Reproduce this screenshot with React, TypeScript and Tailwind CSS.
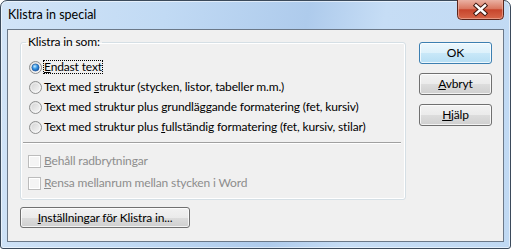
import React from 'react'

function CloseButton() {
  return (
    <svg width="47" height="20" viewBox="0 0 47 20" className="-mt-px mr-[6px] shrink-0">
      <defs>
        <linearGradient id="closeBg" x1="0" y1="0" x2="0" y2="1">
          <stop offset="0" stopColor="#eab1a3" />
          <stop offset="0.45" stopColor="#d9765f" />
          <stop offset="0.5" stopColor="#c7452c" />
          <stop offset="1" stopColor="#d8694c" />
        </linearGradient>
      </defs>
      <path d="M0.5 0 V15.5 Q0.5 19.5 4.5 19.5 H42.5 Q46.5 19.5 46.5 15.5 V0" fill="url(#closeBg)" stroke="#5a261d" />
      <path d="M1.5 0 V15.5 Q1.5 18.5 4.5 18.5 H42.5 Q45.5 18.5 45.5 15.5 V0" fill="none" stroke="#f0b7a8" strokeOpacity="0.6" />
      <path d="M19 5.5 L28 13.5 M28 5.5 L19 13.5" stroke="#3f1710" strokeWidth="4.4" strokeLinecap="square" />
      <path d="M19 5.5 L28 13.5 M28 5.5 L19 13.5" stroke="#ffffff" strokeWidth="2.4" strokeLinecap="square" />
    </svg>
  )
}

function Radio({ checked, id }: { checked?: boolean; id: string }) {
  return (
    <svg width="13" height="13" viewBox="0 0 13 13" className="shrink-0">
      <defs>
        <linearGradient id={`rg${id}`} x1="0" y1="0" x2="1" y2="1">
          <stop offset="0" stopColor="#cfcfcf" />
          <stop offset="1" stopColor="#fbfbfb" />
        </linearGradient>
        <radialGradient id={`rd${id}`} cx="0.4" cy="0.35" r="0.75">
          <stop offset="0" stopColor="#c4ebff" />
          <stop offset="0.45" stopColor="#3595e3" />
          <stop offset="1" stopColor="#154f9f" />
        </radialGradient>
      </defs>
      <circle cx="6.5" cy="6.5" r="6" fill={`url(#rg${id})`} stroke="#8e8f8f" />
      <circle cx="6.5" cy="6.5" r="4.6" fill="none" stroke="#ffffff" strokeOpacity="0.5" />
      {checked && <circle cx="6.5" cy="6.5" r="3.6" fill={`url(#rd${id})`} stroke="#1b4f93" strokeWidth="0.6" />}
    </svg>
  )
}

function Checkbox() {
  return <div className="w-[13px] h-[13px] shrink-0 border border-[#bcbcbc] bg-[#f4f4f4] shadow-[inset_0_0_0_1px_#ffffff]"></div>
}

function Button({ children, primary, className }: { children: React.ReactNode; primary?: boolean; className?: string }) {
  return (
    <div
      className={
        'h-[21px] rounded-[3px] border flex items-center justify-center text-[12px] leading-[14px] text-black whitespace-nowrap shadow-[inset_0_0_0_1px_rgba(255,255,255,0.75)] ' +
        (primary
          ? 'border-[#3c7fb1] bg-[linear-gradient(180deg,#ecf7fd_0%,#ddf1fb_50%,#c9e8f8_50%,#b6def4_100%)] '
          : 'border-[#707070] bg-[linear-gradient(180deg,#f2f2f2_0%,#ebebeb_50%,#dddddd_50%,#cfcfcf_100%)] ') +
        (className ?? '')
      }
    >
      {children}
    </div>
  )
}

const options = [
  { pre: '', u: 'E', post: 'ndast text', checked: true },
  { pre: 'Text med ', u: 's', post: 'truktur (stycken, listor, tabeller m.m.)' },
  { pre: 'Text med struktur plus ', u: 'g', post: 'rundläggande formatering (fet, kursiv)' },
  { pre: 'Text med struktur plus ', u: 'f', post: 'ullständig formatering (fet, kursiv, stilar)' },
]

export default function App() {
  return (
    <div className="w-[511px] h-[249px] bg-white font-['Lato',sans-serif]">
      <div className="w-full h-full flex flex-col rounded-t-[7px] rounded-b-[3px] border border-[#3b4a5b] bg-[linear-gradient(100deg,#d2e4f7_0%,#c1daf4_30%,#aecbec_56%,#c6ddf5_70%,#c0d9f3_100%)] shadow-[inset_0_0_0_1px_rgba(255,255,255,0.55)]">
        <div className="h-[28px] flex items-start justify-between">
          <span className="pl-[7px] mt-[6px] text-[12.5px] leading-[16px] text-black">Klistra in special</span>
          <CloseButton />
        </div>
        <div className="mx-[6px] mb-[6px] flex-1 border border-[#6b7888] bg-[#f0f0f0] flex pl-[12px] pt-[4px] text-[12px] tracking-[-0.15px] text-black whitespace-nowrap">
          <div className="w-[386px] flex flex-col">
            <fieldset className="h-[166px] border border-[#d5dfe5] rounded-[3px] shadow-[inset_0_0_0_1px_#ffffff] flex flex-col">
              <legend className="ml-[5px] px-[2px] leading-[16px]">Klistra in som:</legend>
              <div className="pl-[8px] pt-[7px] flex flex-col">
                {options.map((o, i) => (
                  <div key={i} className="h-[20px] flex items-center gap-[1px]">
                    <Radio checked={o.checked} id={String(i)} />
                    <span className={'leading-[12px] border ' + (o.checked ? 'border-dotted border-black' : 'border-transparent')}>
                      {o.pre}
                      <u>{o.u}</u>
                      {o.post}
                    </span>
                  </div>
                ))}
              </div>
              <div className="mt-[5px] ml-[2px] mr-[4px] h-[2px] border-t border-[#a0a0a0] border-b border-b-white"></div>
              <div className="pl-[7px] pt-[6px] flex flex-col text-[#8d8d8d]">
                <div className="h-[22px] flex items-center gap-[3px]">
                  <Checkbox />
                  <span className="leading-[12px]">
                    <u>B</u>ehåll radbrytningar
                  </span>
                </div>
                <div className="h-[22px] flex items-center gap-[3px]">
                  <Checkbox />
                  <span className="leading-[12px]">
                    <u>R</u>ensa mellanrum mellan stycken i Word
                  </span>
                </div>
              </div>
            </fieldset>
            <Button className="mt-[7px] w-[170px]">
              <span>
                <u>I</u>nställningar för Klistra in...
              </span>
            </Button>
          </div>
          <div className="ml-[13px] pt-[8px] flex flex-col gap-[9px] w-[73px]">
            <Button primary className="h-[22px]">OK</Button>
            <Button className="h-[22px]">
              <span>
                <u>A</u>vbryt
              </span>
            </Button>
            <Button className="h-[22px]">
              <span>
                <u>H</u>jälp
              </span>
            </Button>
          </div>
        </div>
      </div>
    </div>
  )
}
